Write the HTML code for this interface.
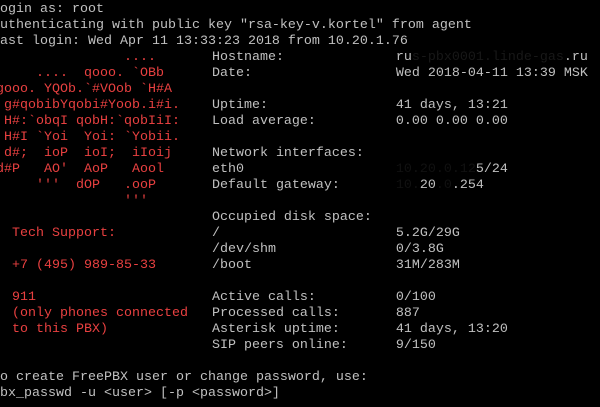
<!DOCTYPE html>
<html><head><meta charset="utf-8"><style>
html,body{margin:0;padding:0;background:#000;width:600px;height:407px;overflow:hidden}
.t{position:absolute;left:-4px;top:2px;font-family:"Liberation Mono",monospace;font-size:13.33px;line-height:16px;color:#c0c0c0}
.l{white-space:pre;height:16px}
.s{margin-left:-4px}
.r{color:#e84040}
.d{color:#111}
.m{color:#181818}
</style></head><body><div class="t">
<div class="l s">login as: root</div>
<div class="l s">Authenticating with public key "rsa-key-v.kortel" from agent</div>
<div class="l s">Last login: Wed Apr 11 13:33:23 2018 from 10.20.1.76</div>
<div class="l"><span class="r">                ....       </span>Hostname:              ru<span class="m">s-pbx0001.linde-gas</span>.ru</div>
<div class="l"><span class="r">     ....  qooo. `OBb      </span>Date:                  Wed 2018-04-11 13:39 MSK</div>
<div class="l"><span class="r">gooo. YQOb.`#VOob `H#A</span></div>
<div class="l"><span class="r"> g#qobibYqobi#Yoob.i#i.    </span>Uptime:                41 days, 13:21</div>
<div class="l"><span class="r"> H#:`obqI qobH:`qobIiI:    </span>Load average:          0.00 0.00 0.00</div>
<div class="l"><span class="r"> H#I `Yoi  Yoi: `Yobii.</span></div>
<div class="l"><span class="r"> d#;  ioP  ioI;  iIoij     </span>Network interfaces:</div>
<div class="l"><span class="r">d#P   AO'  AoP   Aool      </span>eth0                   <span class="d">10.20.0.12</span>5/24</div>
<div class="l"><span class="r">     '''  dOP   .ooP       </span>Default gateway:       <span class="d">10.</span>20<span class="d">.0</span>.254</div>
<div class="l"><span class="r">                '''</span></div>
<div class="l">                           Occupied disk space:</div>
<div class="l"><span class="r">  Tech Support:            </span>/                      5.2G/29G</div>
<div class="l">                           /dev/shm               0/3.8G</div>
<div class="l"><span class="r">  +7 (495) 989-85-33       </span>/boot                  31M/283M</div>
<div class="l"> </div>
<div class="l"><span class="r">  911                      </span>Active calls:          0/100</div>
<div class="l"><span class="r">  (only phones connected   </span>Processed calls:       887</div>
<div class="l"><span class="r">  to this PBX)             </span>Asterisk uptime:       41 days, 13:20</div>
<div class="l">                           SIP peers online:      9/150</div>
<div class="l"> </div>
<div class="l s">To create FreePBX user or change password, use:</div>
<div class="l s">pbx_passwd -u &lt;user&gt; [-p &lt;password&gt;]</div>
</div></body></html>
